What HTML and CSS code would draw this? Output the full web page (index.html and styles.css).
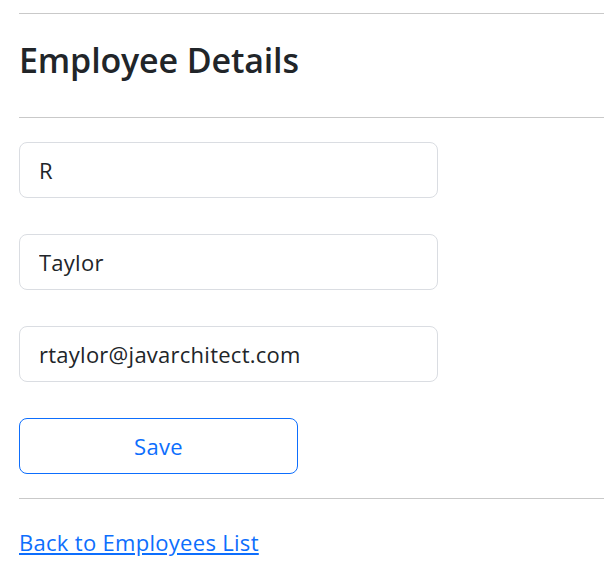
FILE: index.html
```html
<!DOCTYPE html>
<html lang="en">
<head>
<meta charset="utf-8">
<title>Employee Details</title>
<link rel="stylesheet" href="styles.css">
</head>
<body>
<div class="page">
  <hr class="rule rule-top">
  <h2 class="title">Employee Details</h2>
  <hr class="rule rule-title">
  <form class="form">
    <input class="field" type="text" value="R">
    <input class="field" type="text" value="Taylor">
    <input class="field" type="text" value="rtaylor@javarchitect.com">
    <button class="btn-save" type="button">Save</button>
  </form>
  <hr class="rule rule-bottom">
  <a class="back-link" href="#">Back to Employees List</a>
</div>
</body>
</html>
```

FILE: styles.css
```css
html, body {
  margin: 0;
  padding: 0;
  background: #fff;
}
body {
  font-family: "Open Sans", "Noto Sans", sans-serif;
  color: #212529;
  overflow: hidden;
}
.page {
  padding: 13px 0 0 19px;
  display: flex;
  flex-direction: column;
}
.rule {
  border: 0;
  border-top: 1px solid #c9c9c9;
  margin: 0;
  width: 100%;
}
.title {
  font-size: 34px;
  font-weight: 600;
  line-height: 40px;
  margin: 26px 0 0 0;
  height: 77px;
  letter-spacing: -0.15px;
}
.form {
  display: flex;
  flex-direction: column;
  gap: 36px;
  margin-top: 24px;
  align-items: flex-start;
}
.field {
  box-sizing: border-box;
  width: 419px;
  height: 56px;
  border: 1px solid #dadde2;
  border-radius: 8px;
  padding: 0 19px;
  font-family: inherit;
  font-size: 22px;
  letter-spacing: 0.25px;
  color: #212529;
  background: #fff;
}
.btn-save {
  box-sizing: border-box;
  width: 279px;
  height: 56px;
  border: 1px solid #0d6efd;
  border-radius: 8px;
  background: #fff;
  color: #0d6efd;
  font-family: inherit;
  font-size: 22px;
  letter-spacing: 0.3px;
}
.rule-bottom {
  margin-top: 24px;
}
.back-link {
  margin-top: 28px;
  align-self: flex-start;
  color: #0d6efd;
  font-size: 22px;
  line-height: 30px;
  letter-spacing: 0.3px;
  text-decoration: underline;
}
```
